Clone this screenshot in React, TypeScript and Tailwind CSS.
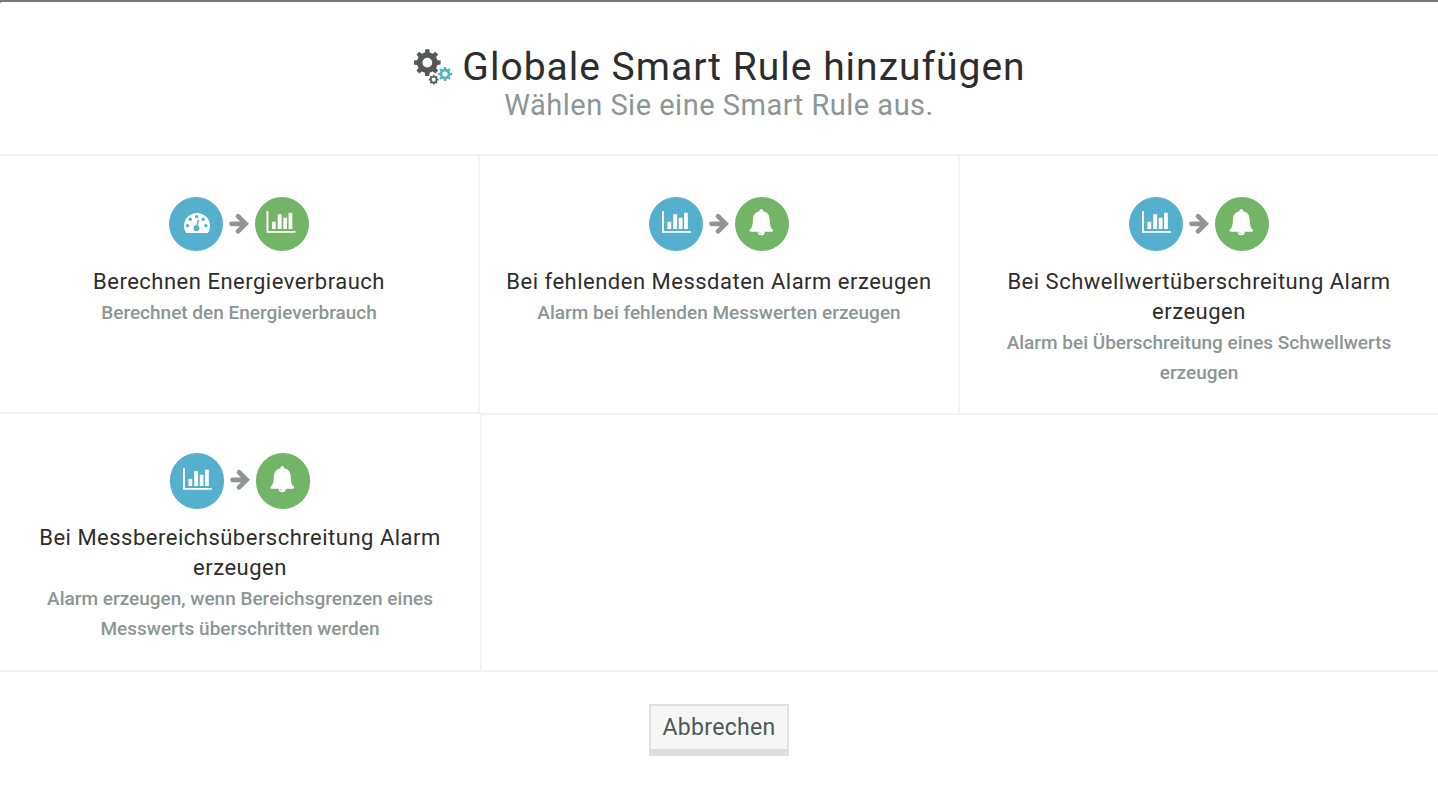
import React from "react";

type IconKind = "gauge" | "chart" | "bell";

function gearPath(cx: number, cy: number, outer: number, inner: number, hole: number, teeth: number, turn = 0) {
  const points: string[] = [];
  const step = (Math.PI * 2) / teeth;
  const at = (r: number, a: number) => `${(cx + r * Math.cos(a)).toFixed(2)} ${(cy + r * Math.sin(a)).toFixed(2)}`;
  for (let i = 0; i < teeth; i++) {
    const a = turn + i * step;
    points.push(at(inner, a - step * 0.29), at(outer, a - step * 0.19), at(outer, a + step * 0.19), at(inner, a + step * 0.29));
  }
  return `M${points.join("L")}ZM${cx - hole} ${cy}a${hole} ${hole} 0 1 0 ${hole * 2} 0a${hole} ${hole} 0 1 0 ${-hole * 2} 0Z`;
}

function GearsIcon() {
  return (
    <svg className="h-[42px] w-[44px] shrink-0" viewBox="0 0 44 42" fillRule="evenodd">
      <path fill="#55565a" d={gearPath(15.3, 16.6, 13.5, 10.4, 4.9, 8, 0)} />
      <path fill="#55b0ce" d={gearPath(33, 28, 7.2, 5.3, 2.6, 8, 0)} />
      <path fill="#55565a" d={gearPath(21.7, 33.7, 4.9, 3.8, 2.1, 8, 0)} />
    </svg>
  );
}

function Glyph({ kind, shift = 0 }: { kind: IconKind; shift?: number }) {
  if (kind === "gauge") {
    return (
      <svg className="h-[54px] w-[54px]" viewBox="0 0 54 54">
        <path fill="#fff" d="M17.2 36C15.8 34 15 31.6 15 29a13 13 0 0 1 26 0c0 2.6-.8 5-2.2 7Z" />
        <g fill="#55b0ce">
          <circle cx="18.5" cy="28.6" r="1.7" />
          <circle cx="21.2" cy="22.2" r="1.7" />
          <circle cx="27.6" cy="19.6" r="1.7" />
          <circle cx="34.2" cy="22.2" r="1.7" />
          <circle cx="36.9" cy="28.6" r="1.7" />
          <circle cx="27.5" cy="31.2" r="2.9" />
        </g>
        <path d="M27.7 30.5 29.3 23.5" stroke="#55b0ce" strokeWidth="1.5" strokeLinecap="round" />
      </svg>
    );
  }
  if (kind === "bell") {
    return (
      <svg className="h-[54px] w-[54px]" viewBox="0 0 54 54">
        <path fill="#fff" d="M26.3 12c1 0 1.8.8 1.8 1.8v.4c4.4.9 6.6 4.2 6.6 8.3 0 5.1.8 8.6 3.4 10.6.2 1-.3 1.6-1.1 1.6h-7.1a3.6 3.6 0 0 1-7.2 0h-7.1c-.9 0-1.3-.7-1.1-1.6 2.600-2 3.400-5.500 3.400-10.600 0-4.100 2.200-7.400 6.600-8.300v-.4c0-1 .8-1.800 1.800-1.800Z" />
        <path d="M24.300 34.800c0 1.200.8 2 2 2" fill="none" stroke="#72b566" strokeWidth=".7" />
      </svg>
    );
  }
  return (
    <svg className="h-[54px] w-[54px]" viewBox="0 0 54 54">
      <g fill="#fff" transform={`translate(${shift} 0)`}>
        <path d="M13 14h1.900v20h27.100v1.800H13Z" />
        <path d="M18.500 24.700h3.700V32h-3.700zM24.200 17.300h3.900V32h-3.900zM29.800 20.700h3.700V32h-3.700zM35.100 15.700h3.700V32h-3.700z" />
      </g>
    </svg>
  );
}

function RuleIcons({ from, to, tall }: { from: IconKind; to: IconKind; tall?: boolean }) {
  const size = tall ? "h-14 pt-px" : "h-[54px]";
  return (
    <div className="flex justify-center">
      <div className={`${size} w-[54px] rounded-[27px] bg-[#55b0ce]`}><Glyph kind={from} /></div>
      <svg className="h-[54px] w-8" viewBox="0 0 32 54">
        <path d="M8.500 26.800h13M15 19.200l7.600 7.600-7.600 7.600" fill="none" stroke="#8b9695" strokeWidth="4.700" strokeLinecap="round" strokeLinejoin="miter" />
      </svg>
      <div className={`${size} w-[54px] rounded-[27px] bg-[#72b566]`}><Glyph kind={to} shift={-1.5} /></div>
    </div>
  );
}

type Line = [text: string, tracking: string];

const rules: { from: IconKind; to: IconKind; title: Line[]; text: Line[]; cell: string; tall?: boolean }[] = [
  {
    from: "gauge", to: "chart",
    title: [["Berechnen Energieverbrauch", "tracking-[0.5px]"]],
    text: [["Berechnet den Energieverbrauch", "tracking-[0px]"]],
    cell: "h-[258px] w-[480px] border-r-2 border-b-2 pt-[41px]",
  },
  {
    from: "chart", to: "bell",
    title: [["Bei fehlenden Messdaten Alarm erzeugen", "tracking-[0.5px]"]],
    text: [["Alarm bei fehlenden Messwerten erzeugen", "tracking-[0px]"]],
    cell: "h-[259px] w-[480px] border-r-2 border-b-2 pt-[41px]",
  },
  {
    from: "chart", to: "bell",
    title: [["Bei Schwellwertüberschreitung Alarm", "tracking-[0.5px]"], ["erzeugen", "tracking-[0.5px]"]],
    text: [["Alarm bei Überschreitung eines Schwellwerts", "tracking-[0px]"], ["erzeugen", "tracking-[0px]"]],
    cell: "h-[259px] w-[478px] border-b-2 pt-[41px]",
  },
  {
    from: "chart", to: "bell", tall: true,
    title: [["Bei Messbereichsüberschreitung Alarm", "tracking-[0.5px]"], ["erzeugen", "tracking-[0.5px]"]],
    text: [["Alarm erzeugen, wenn Bereichsgrenzen eines", "tracking-[0px]"], ["Messwerts überschritten werden", "tracking-[0px]"]],
    cell: "h-[255px] w-[482px] border-r-2 pt-[38px]",
  },
];

function RuleCard({ rule }: { rule: (typeof rules)[number] }) {
  return (
    <button className={`flex shrink-0 flex-col items-center border-[#f2f2f2] ${rule.cell}`}>
      <RuleIcons from={rule.from} to={rule.to} tall={rule.tall} />
      <span className={`flex flex-col items-center text-[22px] leading-[30px] whitespace-nowrap text-[#2d2d2d] ${rule.tall ? "mt-[14px]" : "mt-4"}`}>
        {rule.title.map(([text, tracking]) => <span key={text} className={tracking}>{text}</span>)}
      </span>
      <span className="mt-px flex flex-col items-center text-[19px] leading-[30px] font-medium whitespace-nowrap text-[#8b9695]">
        {rule.text.map(([text, tracking]) => <span key={text} className={tracking}>{text}</span>)}
      </span>
    </button>
  );
}

export default function App() {
  return (
    <div className="h-[786px] w-[1438px] overflow-hidden bg-[#777777] pt-[2px] font-[Roboto,sans-serif]">
      <main className="flex h-full flex-col rounded-tl-[2px] bg-white">
        <header className="h-[154px] border-b-2 border-[#f2f2f2] pt-[44px]">
          <div className="flex h-[42px] justify-center pl-[0px]">
            <GearsIcon />
            <h1 className="ml-1.5 text-[39px] leading-[42px] tracking-[1px] whitespace-nowrap text-[#2d2d2d]">Globale Smart Rule hinzufügen</h1>
          </div>
          <p className="text-center text-[29px] leading-[34px] tracking-[0.5px] text-[#8b9695]">Wählen Sie eine Smart Rule aus.</p>
        </header>
        <section className="flex h-[259px] items-start">
          {rules.slice(0, 3).map((rule) => <RuleCard key={rule.title[0][0]} rule={rule} />)}
        </section>
        <section className="flex h-[257px] border-b-2 border-[#f2f2f2]">
          <RuleCard rule={rules[3]} />
        </section>
        <footer className="flex justify-center pt-8">
          <button className="h-[52px] w-[140px] border-2 border-[#e1e1e1] bg-[#f6f6f6] pb-1 text-[23px] leading-[42px] tracking-[0.3px] text-[#4b5958] shadow-[inset_0_-5px_0_#dddddd]">Abbrechen</button>
        </footer>
      </main>
    </div>
  );
}
